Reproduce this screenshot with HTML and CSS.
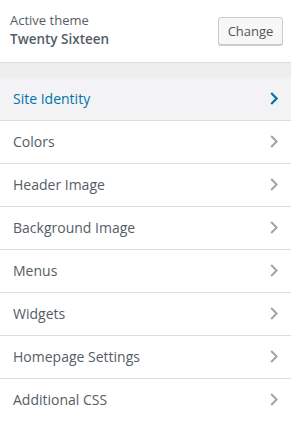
FILE: index.html
```html
<!DOCTYPE html>
<html>
<head>
<meta charset="utf-8">
<link rel="stylesheet" href="styles.css">
</head>
<body>
<div class="panel">
  <div class="theme-header">
    <div class="theme-info">
      <div class="theme-label">Active theme</div>
      <div class="theme-name">Twenty Sixteen</div>
    </div>
    <button class="change-btn">Change</button>
  </div>
  <div class="band"></div>
  <ul class="sections">
    <li class="section active"><span>Site Identity</span><svg class="chev" viewBox="0 0 8 13"><path d="M1.2 1 L6.6 6.5 L1.2 12" /></svg></li>
    <li class="section"><span>Colors</span><svg class="chev" viewBox="0 0 8 13"><path d="M1.2 1 L6.6 6.5 L1.2 12" /></svg></li>
    <li class="section"><span>Header Image</span><svg class="chev" viewBox="0 0 8 13"><path d="M1.2 1 L6.6 6.5 L1.2 12" /></svg></li>
    <li class="section"><span>Background Image</span><svg class="chev" viewBox="0 0 8 13"><path d="M1.2 1 L6.6 6.5 L1.2 12" /></svg></li>
    <li class="section"><span>Menus</span><svg class="chev" viewBox="0 0 8 13"><path d="M1.2 1 L6.6 6.5 L1.2 12" /></svg></li>
    <li class="section"><span>Widgets</span><svg class="chev" viewBox="0 0 8 13"><path d="M1.2 1 L6.6 6.5 L1.2 12" /></svg></li>
    <li class="section"><span>Homepage Settings</span><svg class="chev" viewBox="0 0 8 13"><path d="M1.2 1 L6.6 6.5 L1.2 12" /></svg></li>
    <li class="section"><span>Additional CSS</span><svg class="chev" viewBox="0 0 8 13"><path d="M1.2 1 L6.6 6.5 L1.2 12" /></svg></li>
  </ul>
</div>
</body>
</html>
```
FILE: styles.css
```css
* { box-sizing: border-box; }
html, body { margin: 0; padding: 0; background: #fff; }
body { font-family: "Open Sans", "Noto Sans", sans-serif; color: #555d66; width: 291px; }
.panel { width: 291px; }
.theme-header {
  height: 63px;
  border-bottom: 1px solid #dddddd;
  display: flex;
  align-items: center;
  justify-content: space-between;
  padding: 0 8px 1px 10px;
  background: #fff;
}
.theme-label { font-size: 13px; line-height: 17px; color: #555d66; }
.theme-name { font-size: 13.5px; line-height: 20px; font-weight: 600; color: #555d66; }
.change-btn {
  font-family: inherit;
  font-size: 13px;
  color: #555;
  background: #f7f7f7;
  border: 1px solid #cccccc;
  border-radius: 3px;
  box-shadow: 0 1px 0 #cccccc;
  height: 28px;
  width: 65px;
  padding: 0;
  line-height: 26px;
}
.band { height: 15px; background: #eeeeee; }
.sections { list-style: none; margin: 0; padding: 0; }
.section {
  height: 43px;
  border-bottom: 1px solid #dddddd;
  display: flex;
  align-items: center;
  justify-content: space-between;
  padding: 0 13px 1px 13px;
  font-size: 14px;
  color: #555d66;
  background: #fff;
}
.section.active { background: #f3f3f5; color: #0073aa; }
.chev { width: 8px; height: 13px; fill: none; stroke: #a0a5aa; stroke-width: 2; }
.section.active .chev { stroke: #0073aa; stroke-width: 2.2; }
```
